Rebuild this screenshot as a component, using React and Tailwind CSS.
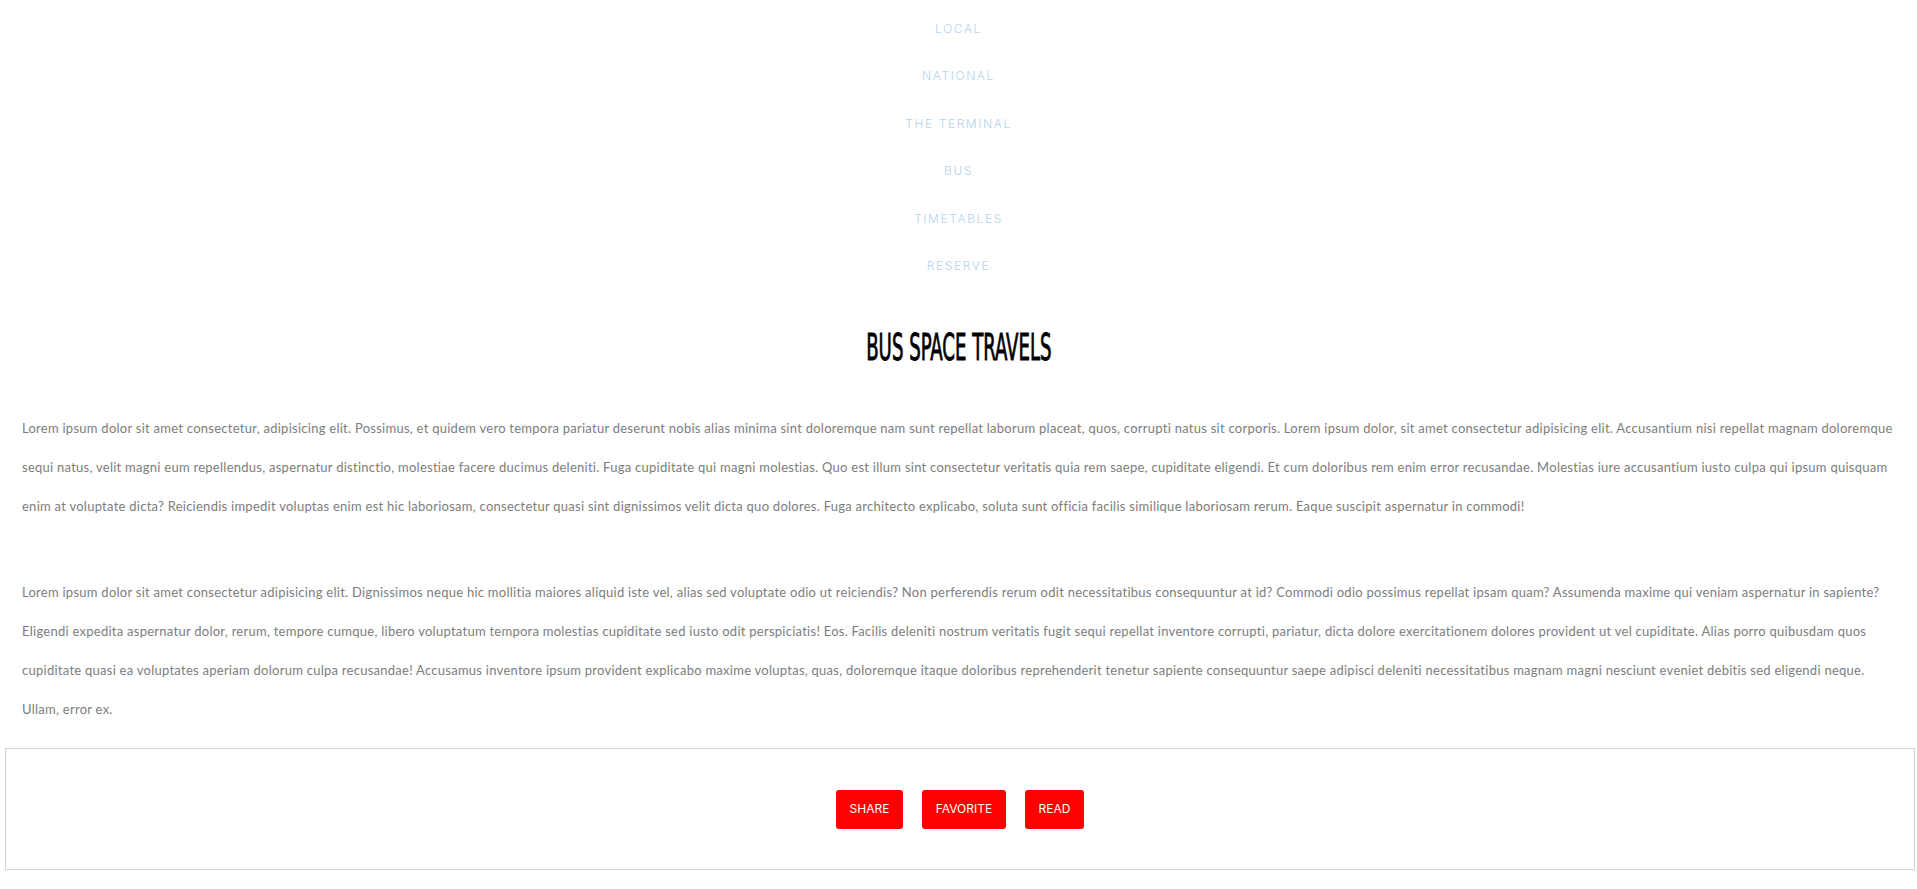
const NAV = ['LOCAL', 'NATIONAL', 'THE TERMINAL', 'BUS', 'TIMETABLES', 'RESERVE'];

const P1 =
  'Lorem ipsum dolor sit amet consectetur, adipisicing elit. Possimus, et quidem vero tempora pariatur deserunt nobis alias minima sint doloremque nam sunt repellat laborum placeat, quos, corrupti natus sit corporis. Lorem ipsum dolor, sit amet consectetur adipisicing elit. Accusantium nisi repellat magnam doloremque sequi natus, velit magni eum repellendus, aspernatur distinctio, molestiae facere ducimus deleniti. Fuga cupiditate qui magni molestias. Quo est illum sint consectetur veritatis quia rem saepe, cupiditate eligendi. Et cum doloribus rem enim error recusandae. Molestias iure accusantium iusto culpa qui ipsum quisquam enim at voluptate dicta? Reiciendis impedit voluptas enim est hic laboriosam, consectetur quasi sint dignissimos velit dicta quo dolores. Fuga architecto explicabo, soluta sunt officia facilis similique laboriosam rerum. Eaque suscipit aspernatur in commodi!';

const P2 =
  'Lorem ipsum dolor sit amet consectetur adipisicing elit. Dignissimos neque hic mollitia maiores aliquid iste vel, alias sed voluptate odio ut reiciendis? Non perferendis rerum odit necessitatibus consequuntur at id? Commodi odio possimus repellat ipsam quam? Assumenda maxime qui veniam aspernatur in sapiente? Eligendi expedita aspernatur dolor, rerum, tempore cumque, libero voluptatum tempora molestias cupiditate sed iusto odit perspiciatis! Eos. Facilis deleniti nostrum veritatis fugit sequi repellat inventore corrupti, pariatur, dicta dolore exercitationem dolores provident ut vel cupiditate. Alias porro quibusdam quos cupiditate quasi ea voluptates aperiam dolorum culpa recusandae! Accusamus inventore ipsum provident explicabo maxime voluptas, quas, doloremque itaque doloribus reprehenderit tenetur sapiente consequuntur saepe adipisci deleniti necessitatibus magnam magni nesciunt eveniet debitis sed eligendi neque. Ullam, error ex.';

export default function App() {
  return (
    <div className="bg-white min-h-[889px] font-['Lato',sans-serif]">
      <nav className="pt-[5px]">
        <ul>
          {NAV.map((n) => (
            <li
              key={n}
              className="h-[47.5px] flex items-center justify-center text-[12px] tracking-[1.6px] font-light text-[#b4d2ee] font-['Inter',sans-serif]"
            >
              {n}
            </li>
          ))}
        </ul>
      </nav>

      <h1 className="h-[114px] flex items-center justify-center">
        <span className="inline-block scale-x-[0.53] text-[38px] font-normal text-black [-webkit-text-stroke:0.9px_black] font-['DejaVu_Sans_Condensed',sans-serif] whitespace-nowrap">
          BUS SPACE TRAVELS
        </span>
      </h1>

      <div className="px-[22px] pt-[5px] text-[13px] tracking-[0.26px] leading-[39px] text-[#7d7d7d]">
        <p>{P1}</p>
        <p className="mt-[47px]">{P2}</p>
      </div>

      <div className="mt-[19px] ml-[5px] mr-[2px] h-[122px] border border-[#d3d3d3] flex items-center justify-center gap-[19px]">
        <button className="w-[67px] h-[39px] bg-[#ff0000] text-white text-[12px] rounded-[3px] font-['Inter',sans-serif]">
          SHARE
        </button>
        <button className="w-[84px] h-[39px] bg-[#ff0000] text-white text-[12px] rounded-[3px] font-['Inter',sans-serif]">
          FAVORITE
        </button>
        <button className="w-[59px] h-[39px] bg-[#ff0000] text-white text-[12px] rounded-[3px] font-['Inter',sans-serif]">
          READ
        </button>
      </div>
    </div>
  );
}
